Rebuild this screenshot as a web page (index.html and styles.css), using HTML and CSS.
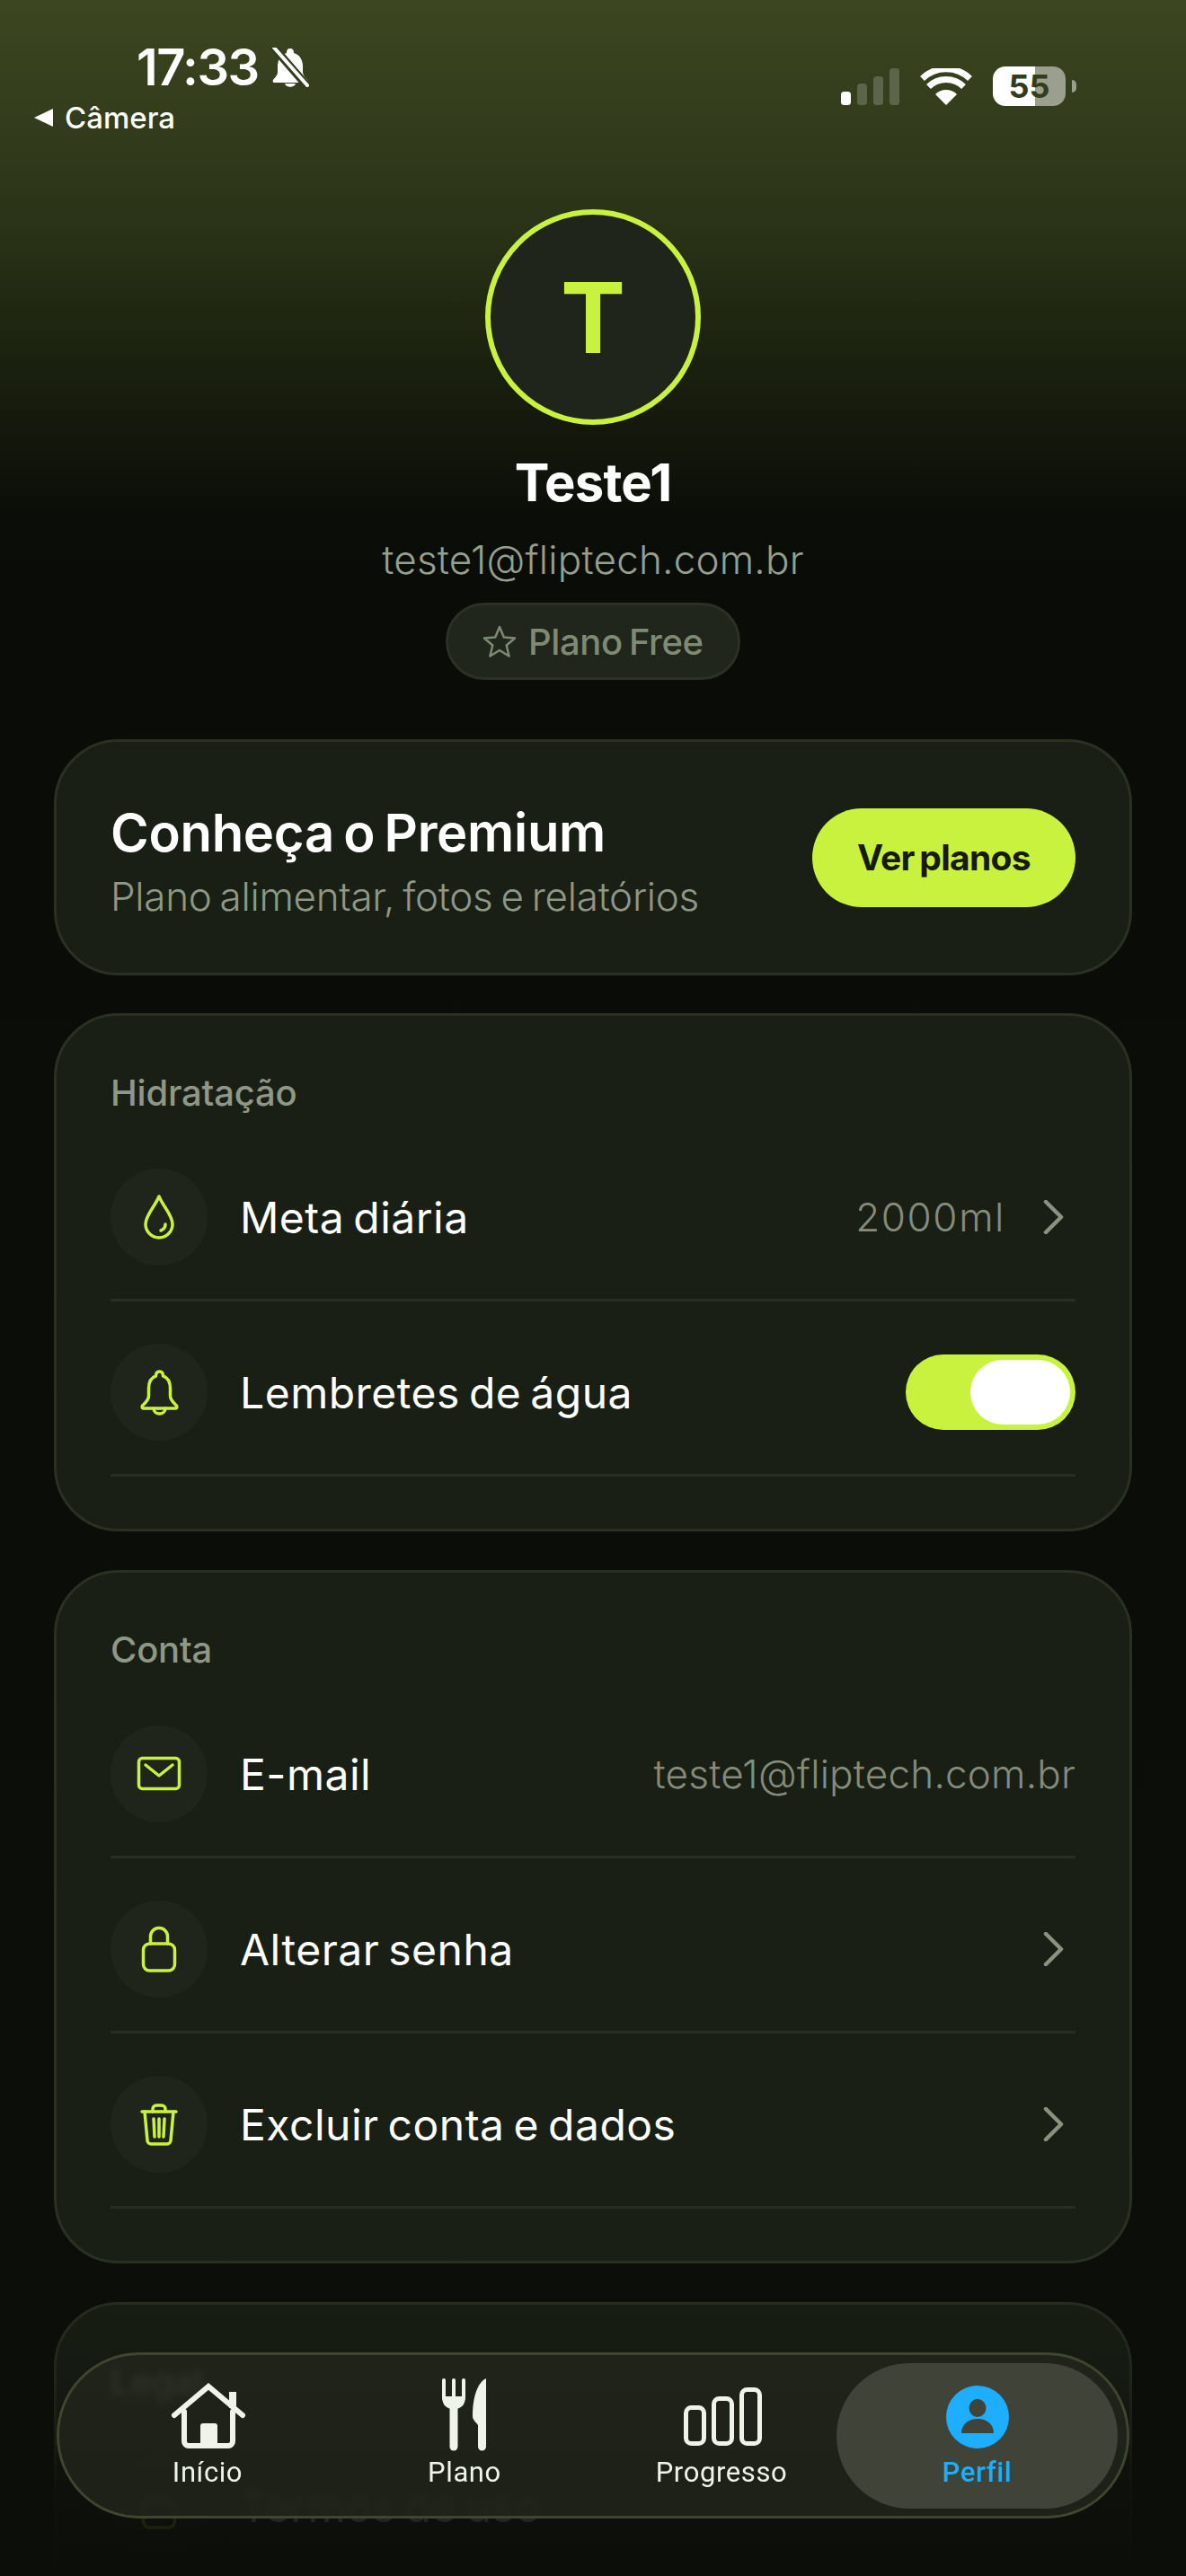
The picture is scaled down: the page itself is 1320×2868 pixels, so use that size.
FILE: index.html
```html
<!DOCTYPE html>
<html lang="pt-BR">
    <head>
        <meta charset="utf-8">
        <title>Perfil</title>
        <link rel="stylesheet" href="styles.css">
    </head>
    <body>
        <div class="page">
            <div class="status">
                <div class="status-left">
                    <div class="clock">
                        <span class="time">17:33</span>
                        <svg class="mute" width="44" height="44" viewBox="0 0 44 44">
                            <path d="M22 1c-3 0-4 2-4 5-7 2-10 8-10 15v6c0 4-3 6-5 9-1 1 0 3 1 3h36c1 0 2-2 1-3-2-3-5-5-5-9v-6c0-7-3-13-10-15 0-3-1-5-4-5z" fill="#fff"/>
                            <path d="M16 40c1 5 11 5 12 0z" fill="#fff"/>
                            <path d="M3 -1L41 43" stroke="#333c1c" stroke-width="9"/>
                            <path d="M4 0L41 42" stroke="#fff" stroke-width="4" stroke-linecap="round"/>
                        </svg>
                    </div>
                    <div class="back">
                        <span class="back-arrow"></span>
                        <span>Câmera</span>
                    </div>
                </div>
                <div class="status-right">
                    <svg width="65" height="41" viewBox="0 0 65 41">
                        <rect x="0" y="26" width="11" height="15" rx="3.5" fill="#fff"/>
                        <rect x="18" y="17" width="11" height="24" rx="3.5" fill="#5c6449"/>
                        <rect x="36" y="9" width="11" height="32" rx="3.5" fill="#5c6449"/>
                        <rect x="54" y="0" width="11" height="41" rx="3.5" fill="#5c6449"/>
                    </svg>
                    <svg class="wifi" width="58" height="42" viewBox="0 0 58 42">
                        <path d="M29 41L17 29a17 17 0 0 1 24 0z" fill="#fff"/>
                        <path d="M9.500 20.500a28 28 0 0 1 39 0" fill="none" stroke="#fff" stroke-width="7"/>
                        <path d="M2.500 11.500a38 38 0 0 1 53 0" fill="none" stroke="#fff" stroke-width="7"/>
                    </svg>
                    <div class="battery">55</div>
                    <div class="battery-tip"></div>
                </div>
            </div>

            <div class="profile">
                <div class="avatar">T</div>
                <div class="name">Teste1</div>
                <div class="mail">teste1@fliptech.com.br</div>
                <div class="plan">
                    <svg width="38" height="38" viewBox="0 0 38 38">
                        <path d="M19 3l4.800 11.500 12.200 1-9.300 8 2.900 12L19 29l-10.600 6.500 2.900-12-9.300-8 12.200-1z" fill="none" stroke="#7f8a74" stroke-width="2.500" stroke-linejoin="round"/>
                    </svg>
                    <span>Plano Free</span>
                </div>
            </div>

            <div class="card premium">
                <div class="premium-text">
                    <div class="premium-title">Conheça o Premium</div>
                    <div class="premium-sub">Plano alimentar, fotos e relatórios</div>
                </div>
                <div class="see-plans">Ver planos</div>
            </div>

            <div class="card">
                <div class="card-head">Hidratação</div>
                <div class="row">
                    <div class="row-icon">
                        <svg width="60" height="60" viewBox="0 0 60 60">
                            <path d="M30 7C25 19 15 28 15 38a15 15 0 0 0 30 0C45 28 35 19 30 7z"/>
                            <path d="M37 38c0 4-2 6-5 7"/>
                        </svg>
                    </div>
                    <span class="row-label">Meta diária</span>
                    <span class="row-value">2000ml</span>
                    <svg class="chevron" width="24" height="38" viewBox="0 0 24 38">
                        <path d="M3 2l17 17L3 36"/>
                    </svg>
                </div>
                <div class="row">
                    <div class="row-icon">
                        <svg width="60" height="60" viewBox="0 0 60 60">
                            <path d="M30.500 7c-3 0-4 2-4 5-6 2-8 8-8 14v8c0 5-4 8-7 11-1 2 0 3 1 3h36c1 0 2-1 1-3-3-3-7-6-7-11v-8c0-6-2-12-8-14 0-3-1-5-4-5z"/>
                            <path d="M24 48c0 8 13 8 13 0"/>
                        </svg>
                    </div>
                    <span class="row-label">Lembretes de água</span>
                    <div class="toggle"><div class="knob"></div></div>
                </div>
            </div>

            <div class="card">
                <div class="card-head">Conta</div>
                <div class="row">
                    <div class="row-icon">
                        <svg width="60" height="60" viewBox="0 0 60 60">
                            <rect x="7.500" y="12.500" width="45" height="34" rx="4"/>
                            <path d="M15 20l15 12 15-12"/>
                        </svg>
                    </div>
                    <span class="row-label">E-mail</span>
                    <span class="row-value wide">teste1@fliptech.com.br</span>
                </div>
                <div class="row">
                    <div class="row-icon">
                        <svg width="60" height="60" viewBox="0 0 60 60">
                            <rect x="12.500" y="24" width="35" height="30" rx="7"/>
                            <path d="M20.500 24v-8a9.500 9.500 0 0 1 19 0v8"/>
                        </svg>
                    </div>
                    <span class="row-label">Alterar senha</span>
                    <svg class="chevron" width="24" height="38" viewBox="0 0 24 38">
                        <path d="M3 2l17 17L3 36"/>
                    </svg>
                </div>
                <div class="row">
                    <div class="row-icon">
                        <svg width="60" height="60" viewBox="0 0 60 60">
                            <path d="M11 16h38"/>
                            <path d="M23 16v-3a4 4 0 0 1 4-4h6a4 4 0 0 1 4 4v3"/>
                            <path d="M14 16l3 32a4 4 0 0 0 4 4h18a4 4 0 0 0 4-4l3-32"/>
                            <path d="M24 24l1 20M30 24v20M36 24l-1 20"/>
                        </svg>
                    </div>
                    <span class="row-label">Excluir conta e dados</span>
                    <svg class="chevron" width="24" height="38" viewBox="0 0 24 38">
                        <path d="M3 2l17 17L3 36"/>
                    </svg>
                </div>
            </div>

            <div class="card">
                <div class="card-head">Legal</div>
                <div class="row">
                    <div class="row-icon">
                        <svg width="60" height="60" viewBox="0 0 60 60">
                            <rect x="12.500" y="24" width="35" height="30" rx="7"/>
                        </svg>
                    </div>
                    <span class="row-label">Termos de uso</span>
                </div>
            </div>

            <div class="fade"></div>

            <div class="nav">
                <div class="nav-item">
                    <svg width="90" height="90" viewBox="0 0 90 90" fill="none" stroke="#eff4e8" stroke-width="6" stroke-linecap="round">
                        <rect x="69" y="17" width="8" height="18" fill="#eff4e8" stroke="none"/>
                        <path d="M8 43L46 11l38 32"/>
                        <path d="M19 39v33a5 5 0 0 0 5 5h44a5 5 0 0 0 5-5V39"/>
                        <path d="M37 77V55a3 3 0 0 1 3-3h13a3 3 0 0 1 3 3v22z" fill="#eff4e8" stroke="none"/>
                    </svg>
                    <span>Início</span>
                </div>
                <div class="nav-item">
                    <svg width="90" height="90" viewBox="0 0 90 90" fill="none" stroke="#eff4e8" stroke-linecap="round">
                        <path d="M22 4v20M33 4v20M44 4v20" stroke-width="4"/>
                        <path d="M22 22c0 8 4 12 11 12s11-4 11-12" stroke-width="4" fill="#eff4e8"/>
                        <path d="M33 34v44" stroke-width="9"/>
                        <path d="M69 2c-9 4-15 20-15 42 0 4 3 6 6 10v24a4.500 4.500 0 0 0 9 0z" fill="#eff4e8" stroke="none"/>
                    </svg>
                    <span>Plano</span>
                </div>
                <div class="nav-item">
                    <svg width="90" height="90" viewBox="0 0 90 90" fill="none" stroke="#eff4e8" stroke-width="5">
                        <rect x="5.500" y="34.500" width="20" height="40" rx="6"/>
                        <rect x="36.500" y="24.500" width="20" height="50" rx="6"/>
                        <rect x="67.500" y="14.500" width="20" height="60" rx="6"/>
                    </svg>
                    <span>Progresso</span>
                </div>
                <div class="nav-item active">
                    <svg width="90" height="90" viewBox="0 0 90 90">
                        <circle cx="45" cy="45" r="35" fill="#1eaeff"/>
                        <ellipse cx="45" cy="35" rx="9.500" ry="10" fill="#3f4338"/>
                        <path d="M27 63c0-10 8-16 18-16s18 6 18 16z" fill="#3f4338"/>
                    </svg>
                    <span>Perfil</span>
                </div>
            </div>
        </div>
    </body>
</html>
```

FILE: styles.css
```css
html, body {
    margin: 0;
    padding: 0;
    background-color: #0b0e09;
}

.page {
    position: relative;
    width: 1320px;
    height: 2868px;
    overflow: hidden;
    font-family: Inter, "Liberation Sans", sans-serif;
    color: #fff;
    background: linear-gradient(180deg, #3c4620 0, #2f371a 200px, #252d14 300px, #1b210f 400px, #12160b 500px, #0b0e08 570px, #0a0c07 660px, #0b0e09 100%);
}

/* status bar */
.status {
    display: flex;
    justify-content: space-between;
    height: 233px;
}

.status-left {
    padding: 50px 0 0 38px;
}

.clock {
    display: flex;
    align-items: center;
    padding-left: 114px;
    height: 50px;
}

.time {
    font-size: 56px;
    font-weight: 600;
    letter-spacing: -1.5px;
}

.mute {
    margin-left: 13px;
}

.back {
    display: flex;
    align-items: center;
    margin-top: 11px;
    font-size: 33px;
    font-weight: 500;
}

.back-arrow {
    width: 0;
    height: 0;
    margin-right: 13px;
    border-top: 10px solid transparent;
    border-bottom: 10px solid transparent;
    border-right: 21px solid #fff;
}

.status-right {
    display: flex;
    align-items: flex-start;
    padding: 76px 122px 0 0;
}

.wifi {
    margin-left: 23px;
}

.battery {
    width: 81px;
    height: 44px;
    margin: -2px 0 0 23px;
    border-radius: 14px;
    background: linear-gradient(90deg, #fff 58%, #9a9f8e 58%);
    color: #333c1c;
    font-size: 36px;
    font-weight: 700;
    line-height: 44px;
    text-align: center;
}

.battery-tip {
    width: 5px;
    height: 14px;
    margin: 13px 0 0 7px;
    border-radius: 0 5px 5px 0;
    background-color: #9a9f8e;
}

/* profile head */
.profile {
    display: flex;
    flex-direction: column;
    align-items: center;
    height: 590px;
}

.avatar {
    display: flex;
    align-items: center;
    justify-content: center;
    box-sizing: border-box;
    width: 240px;
    height: 240px;
    border: 6px solid #c9f23e;
    border-radius: 50%;
    background-color: #20251b;
    color: #c9f23e;
    font-size: 108px;
    font-weight: 700;
}

.name {
    margin-top: 28px;
    font-size: 58px;
    font-weight: 700;
    line-height: 72px;
    letter-spacing: -0.8px;
}

.mail {
    margin-top: 22px;
    font-size: 44px;
    font-weight: 300;
    line-height: 56px;
    letter-spacing: 0.2px;
    color: #979f8e;
}

.plan {
    display: flex;
    align-items: center;
    gap: 13px;
    box-sizing: border-box;
    width: 328px;
    height: 86px;
    margin-top: 20px;
    padding-left: 38px;
    border: 3px solid #2b3124;
    border-radius: 43px;
    background-color: #20261b;
    color: #7f8a74;
    font-size: 40px;
    font-weight: 500;
    letter-spacing: -0.4px;
    word-spacing: -3px;
}

/* cards */
.card {
    box-sizing: border-box;
    width: 1200px;
    margin: 0 60px 43px;
    padding: 0 60px 58px;
    border: 3px solid #2a3022;
    border-radius: 72px;
    background-color: #1a1f15;
}

.premium {
    display: flex;
    align-items: center;
    justify-content: space-between;
    height: 263px;
    margin-bottom: 42px;
    padding-bottom: 0;
}

.premium-text {
    padding-top: 8px;
}

.premium-title {
    font-size: 58px;
    font-weight: 600;
    line-height: 70px;
    letter-spacing: -0.3px;
    word-spacing: -4px;
}

.premium-sub {
    margin-top: 8px;
    font-size: 44px;
    font-weight: 300;
    line-height: 56px;
    letter-spacing: -0.3px;
    word-spacing: -3px;
    color: #8f9786;
}

.see-plans {
    width: 293px;
    height: 110px;
    border-radius: 55px;
    background-color: #c9f23e;
    color: #161b0e;
    font-size: 39px;
    font-weight: 700;
    line-height: 110px;
    letter-spacing: -0.7px;
    word-spacing: -3px;
    text-align: center;
}

.card-head {
    height: 60px;
    padding-top: 63px;
    font-size: 40px;
    font-weight: 500;
    line-height: 46px;
    letter-spacing: -0.2px;
    color: #8f9786;
}

.row {
    display: flex;
    align-items: center;
    height: 108px;
    padding: 47px 0 37px;
    border-bottom: 3px solid #282e20;
}

.row-icon {
    display: flex;
    align-items: center;
    justify-content: center;
    flex-shrink: 0;
    width: 108px;
    height: 108px;
    margin-right: 36px;
    border-radius: 50%;
    background-color: #20251b;
}

.row-icon svg {
    fill: none;
    stroke: #c9f23e;
    stroke-width: 3.5;
    stroke-linecap: round;
    stroke-linejoin: round;
}

.row-label {
    flex: 1;
    font-size: 48px;
    font-weight: 400;
    letter-spacing: 0.5px;
    word-spacing: -4px;
}

.row-value {
    margin-right: 42px;
    font-size: 44px;
    font-weight: 300;
    letter-spacing: 1.6px;
    color: #858c7c;
}

.row-value.wide {
    margin-right: 0;
    letter-spacing: 0.2px;
}

.chevron {
    margin-right: 12px;
    fill: none;
    stroke: #8a9280;
    stroke-width: 4.500;
    stroke-linecap: round;
    stroke-linejoin: round;
}

.toggle {
    box-sizing: border-box;
    width: 189px;
    height: 84px;
    padding: 6px;
    border-radius: 42px;
    background-color: #c9f23e;
}

.knob {
    width: 111px;
    height: 72px;
    margin-left: auto;
    border-radius: 36px;
    background-color: #fff;
}

/* bottom fade and tab bar, both float over the list */
.fade {
    position: absolute;
    left: 0;
    right: 0;
    top: 2500px;
    bottom: 0;
    background: linear-gradient(180deg, rgba(11, 14, 9, 0) 0, rgba(11, 14, 9, 0.3) 150px, rgba(11, 14, 9, 0.85) 270px, #0b0e09 100%);
}

.nav {
    position: absolute;
    left: 63px;
    top: 2619px;
    display: flex;
    box-sizing: border-box;
    width: 1194px;
    height: 185px;
    padding: 9px 0 0 22px;
    border: 3px solid #3e4630;
    border-radius: 92px;
    background-color: rgba(34, 38, 28, 0.8);
    backdrop-filter: blur(4px);
}

.nav-item {
    display: flex;
    flex-direction: column;
    align-items: center;
    box-sizing: border-box;
    width: 286px;
    height: 162px;
    padding-top: 15px;
    font-family: Roboto, "Liberation Sans", sans-serif;
    font-size: 31px;
    font-weight: 400;
    letter-spacing: 0.6px;
    color: #eff4e8;
}

.nav-item span {
    line-height: 40px;
    margin-top: -3px;
}

.nav-item.active {
    width: 313px;
    margin-left: -15px;
    border-radius: 81px;
    background-color: #3f4338;
    font-weight: 500;
    color: #1eaeff;
}
```
